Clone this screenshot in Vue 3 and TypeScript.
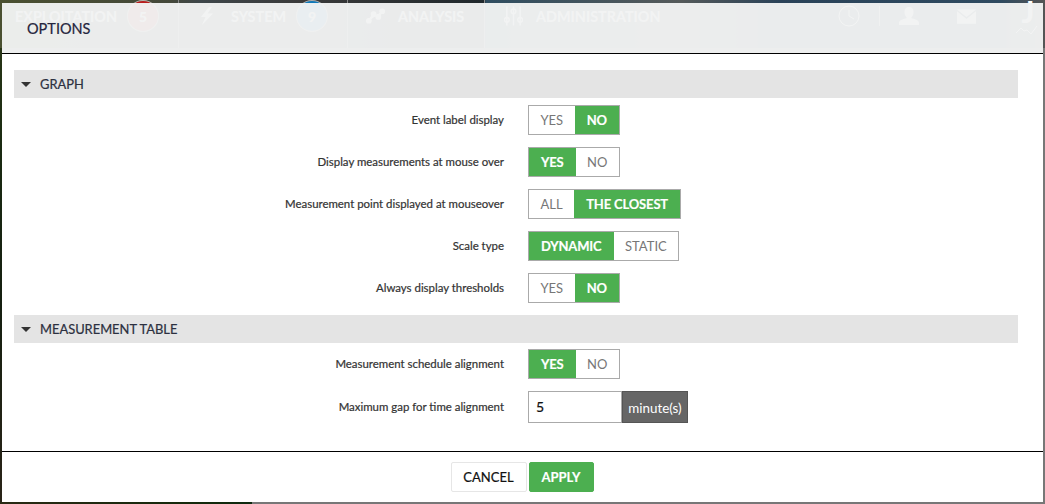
<script setup lang="ts">
interface Option {
  label: string
  choices: string[]
  active: number
}

const graph: Option[] = [
  { label: 'Event label display', choices: ['YES', 'NO'], active: 1 },
  { label: 'Display measurements at mouse over', choices: ['YES', 'NO'], active: 0 },
  { label: 'Measurement point displayed at mouseover', choices: ['ALL', 'THE CLOSEST'], active: 1 },
  { label: 'Scale type', choices: ['DYNAMIC', 'STATIC'], active: 0 },
  { label: 'Always display thresholds', choices: ['YES', 'NO'], active: 1 },
]
</script>

<template>
  <div class="page">
    <nav class="nav">
      <span class="nav-item first">EXPLOITATION<b class="badge red">5</b></span>
      <span class="nav-item second">
        <svg class="bolt" viewBox="0 0 14 18"><path d="M9 0 1 10h4.500L2 18 13 6.500H7.500L12 0z" /></svg>
        SYSTEM<b class="badge blue">9</b>
      </span>
      <span class="nav-item third">
        <svg class="trend" viewBox="0 0 20 16">
          <path d="M3 13 8 6l5 3 4-6" />
          <circle cx="3" cy="13" r="2" /><circle cx="8" cy="6" r="2" /><circle cx="13" cy="9" r="2" /><circle cx="17" cy="3" r="2" />
        </svg>
        ANALYSIS
      </span>
      <span class="nav-item fourth">
        <svg class="sliders" viewBox="0 0 20 20">
          <path d="M3 0v20M10 0v20M17 0v20" />
          <circle cx="3" cy="14" r="2.500" /><circle cx="10" cy="5" r="2.500" /><circle cx="17" cy="14" r="2.500" />
        </svg>
        ADMINISTRATION
      </span>
      <span class="nav-icons">
        <svg class="clock" viewBox="0 0 22 22"><circle cx="11" cy="11" r="10" /><path d="M11 5v6l5 3" /></svg>
        <i class="nav-rule"></i>
        <svg class="user" viewBox="0 0 20 18"><path d="M10 0c3 0 4.500 2 4.500 5s-1.500 5-2.500 6c3 1 8 2 8 5v2H0v-2c0-3 5-4 8-5C7 10 5.500 8 5.500 5S7 0 10 0z" /></svg>
        <svg class="mail" viewBox="0 0 20 15"><path d="M0 0h20L10 8z" /><path d="M0 2v13h20V2L10 10z" /></svg>
        <span class="brand">
          <span class="brand-j">J</span>
          <svg class="wave" viewBox="0 0 24 10"><path d="M0 8 5 3l3 3 3-1 4 4 6-8" /></svg>
        </span>
      </span>
    </nav>

    <section class="modal">
      <header class="modal-head">OPTIONS</header>
      <div class="modal-body">
        <h3 class="section"><i class="caret"></i>GRAPH</h3>
        <div class="rows first-rows">
          <div v-for="opt in graph" :key="opt.label" class="row">
            <span class="label">{{ opt.label }}</span>
            <div class="toggle">
              <span
                v-for="(c, i) in opt.choices"
                :key="c"
                class="choice"
                :class="{ on: i === opt.active }"
              >{{ c }}</span>
            </div>
          </div>
        </div>
        <h3 class="section"><i class="caret"></i>MEASUREMENT TABLE</h3>
        <div class="rows">
          <div class="row">
            <span class="label">Measurement schedule alignment</span>
            <div class="toggle">
              <span class="choice on">YES</span>
              <span class="choice">NO</span>
            </div>
          </div>
          <div class="row">
            <span class="label">Maximum gap for time alignment</span>
            <div class="field">
              <span class="value">5</span>
              <span class="unit">minute(s)</span>
            </div>
          </div>
        </div>
      </div>
      <footer class="modal-foot">
        <button class="btn cancel">CANCEL</button>
        <button class="btn apply">APPLY</button>
      </footer>
    </section>
  </div>
</template>

<style>
html, body { margin: 0; padding: 0; background: #777; }
</style>

<style scoped>
.page {
  position: relative;
  width: 1045px;
  height: 504px;
  overflow: hidden;
  background:
    linear-gradient(90deg, #2a2a14 0, #142a0c 200px, #0e2a10 252px, transparent 252px) bottom left / 100% 2px no-repeat,
    linear-gradient(180deg, #2e3a18 0, #1a2a12 30%, #151f10 60%, #2a2418 100%) left top / 2px 100% no-repeat,
    #777;
  font-family: Lato, "Open Sans", sans-serif;
}
.nav {
  display: flex;
  height: 48px;
  color: #fff;
  font-size: 14.4px;
  font-weight: 700;
  background: linear-gradient(90deg, #4a5030 0, #44483a 170px, #3e464a 200px, #3a3a3a 300px, #20282c 484px, #2f4d60 486px, #555a5a 680px, #2a4258 780px, #2e4a60 1000px, #555 1045px);
}
.nav-item {
  display: flex;
  align-items: center;
  box-sizing: border-box;
  padding-bottom: 16px;
  white-space: nowrap;
  border-right: 1px solid #8a8a8a;
}
.first { width: 179px; padding-left: 15px; }
.second { width: 169px; padding-left: 21px; }
.third { width: 137px; padding-left: 18px; }
.fourth { padding-left: 19px; border-right: 0; }
.badge {
  display: inline-flex;
  align-items: center;
  justify-content: center;
  width: 30px;
  height: 30px;
  margin-left: 11px;
  border-radius: 50%;
  font-size: 14px;
  box-shadow: 0 0 0 1px rgba(255, 255, 255, 0.6);
}
.red { background: #b81c1c; }
.blue { background: #0f78b8; }
.bolt { width: 14px; height: 18px; margin-right: 17px; fill: #fff; }
.trend { width: 19px; height: 16px; margin-right: 13px; fill: #fff; stroke: #fff; stroke-width: 2; }
.sliders { width: 19px; height: 20px; margin-right: 13px; fill: none; stroke: #fff; stroke-width: 1.500; }
.nav-icons {
  display: flex;
  align-items: center;
  margin-left: auto;
  width: 207px;
  flex: none;
  box-sizing: border-box;
  padding-bottom: 16px;
}
.clock { width: 22px; height: 22px; fill: none; stroke: #fff; stroke-width: 1; }
.nav-rule { width: 1px; height: 20px; margin: 0 19px; background: #bbb; }
.user { width: 20px; height: 18px; fill: #fff; }
.mail { width: 19px; height: 15px; margin-left: 38px; fill: #fff; }
.brand { position: relative; margin-left: 40px; width: 24px; height: 32px; }
.brand-j { display: block; font-size: 30px; line-height: 22px; text-align: center; }
.wave { position: absolute; left: 0; top: 25px; width: 24px; height: 10px; fill: none; stroke: #fff; stroke-width: 1; }
.modal {
  position: absolute;
  left: 2px;
  right: 2px;
  top: 3px;
  bottom: 2px;
  display: flex;
  flex-direction: column;
  color: #333;
}
.modal-head {
  flex: none;
  height: 51px;
  box-sizing: border-box;
  padding: 17px 0 0 25px;
  font-size: 14.5px;
  line-height: 17px;
  color: #26263e;
  background: rgba(242, 243, 243, 0.965);
  border-bottom: 1px solid #000;
  -webkit-text-stroke: 0.2px #26263e;
}
.modal-body {
  flex: 1;
  background: #fff;
  padding: 16px 25px 0 12px;
}
.section {
  display: flex;
  align-items: center;
  height: 28px;
  margin: 0;
  padding-left: 7px;
  background: #e4e4e4;
  font-size: 12.9px;
  font-weight: 400;
  color: #2c3040;
  -webkit-text-stroke: 0.2px #2c3040;
}
.caret {
  width: 0;
  height: 0;
  margin-right: 9px;
  border-left: 5px solid transparent;
  border-right: 5px solid transparent;
  border-top: 5px solid #333;
}
.rows {
  display: flex;
  flex-direction: column;
  gap: 12px;
  padding-top: 6px;
}
.first-rows { padding: 7px 0 12px; }
.row { display: flex; align-items: center; gap: 24px; min-height: 30px; }
.label {
  width: 490px;
  padding-bottom: 2px;
  text-align: right;
  font-size: 11.43px;
  color: #333;
  -webkit-text-stroke: 0.2px #333;
}
.toggle { display: flex; border: 1px solid #aaa; height: 30px; box-sizing: border-box; }
.choice {
  display: flex;
  align-items: center;
  justify-content: center;
  padding: 0 11.500px;
  font-size: 13px;
  color: #777;
  background: #fff;
}
.choice.on {
  padding: 0 12px;
  background: #4caf50;
  color: #fff;
  font-weight: 700;
  letter-spacing: -0.15px;
  -webkit-text-stroke: 0.15px #fff;
}
.field { display: flex; height: 32px; }
.value {
  display: flex;
  align-items: center;
  width: 94px;
  box-sizing: border-box;
  padding: 0 0 2px 7px;
  border: 1px solid #aaa;
  font-size: 14px;
  color: #111;
  -webkit-text-stroke: 0.2px #111;
}
.unit {
  display: flex;
  align-items: center;
  justify-content: center;
  width: 66px;
  padding-top: 2px;
  background: #666;
  border: 1px solid #555;
  box-sizing: border-box;
  color: #fff;
  font-size: 13.4px;
}
.modal-foot {
  flex: none;
  height: 51px;
  box-sizing: border-box;
  background: #fff;
  border-top: 1px solid #000;
  display: flex;
  justify-content: center;
  align-items: flex-start;
  gap: 2px;
  padding-top: 10px;
  padding-right: 1px;
}
.btn {
  height: 30px;
  border-radius: 2px;
  font-family: inherit;
  font-size: 13px;
  padding: 0;
}
.cancel { width: 76px; background: #fff; border: 1px solid #e6e6e6; color: #111; -webkit-text-stroke: 0.2px #111; }
.apply { width: 65px; background: #4caf50; border: 1px solid #4caf50; color: #fff; font-weight: 700; -webkit-text-stroke: 0.15px #fff; }
</style>
